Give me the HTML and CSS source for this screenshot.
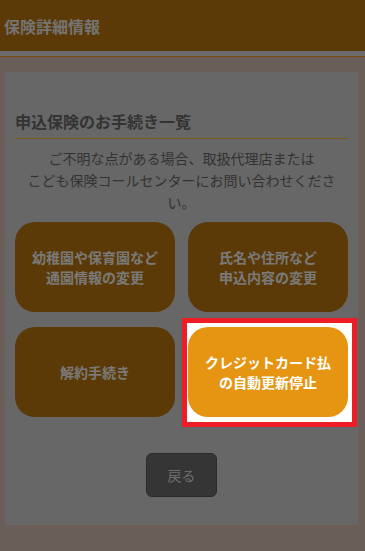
FILE: index.html
```html
<!DOCTYPE html>
<html lang="ja">
<head>
  <meta charset="utf-8">
  <title>保険詳細情報</title>
  <link rel="stylesheet" href="styles.css">
</head>
<body>
  <header class="app-header">
    <h1 class="app-title">保険詳細情報</h1>
  </header>
  <div class="header-band"></div>

  <main class="page">
    <section class="card">
      <h2 class="card-title">申込保険のお手続き一覧</h2>
      <p class="card-note">ご不明な点がある場合、取扱代理店または<br>こども保険コールセンターにお問い合わせください。</p>

      <div class="menu">
        <a href="javascript: void 0;" class="menu-item">幼稚園や保育園など<br>通園情報の変更</a>
        <a href="javascript: void 0;" class="menu-item">氏名や住所など<br>申込内容の変更</a>
        <a href="javascript: void 0;" class="menu-item">解約手続き</a>
        <div class="menu-cell">
          <span class="highlight"></span>
          <a href="javascript: void 0;" class="menu-item menu-item-active">クレジットカード払<br>の自動更新停止</a>
        </div>
      </div>

      <div class="back-row">
        <a href="javascript: void 0;" class="back-btn">戻る</a>
      </div>
    </section>
  </main>
</body>
</html>
```

FILE: styles.css
```css
html, body {
  padding: 0;
  margin: 0;
}
body {
  background-color: #695f58;
  font-family: "Noto Sans CJK JP", "Noto Sans", sans-serif;
  color: #333;
}
.app-header {
  height: 51px;
  background-color: #5c3a08;
  display: flex;
  align-items: center;
  padding-left: 4px;
}
.app-title {
  margin: 0;
  font-size: 16px;
  font-weight: bold;
  color: #747474;
}
.header-band {
  height: 5px;
  background-color: #6b6b6b;
  border-bottom: 1px solid #7a4a0c;
}
.page {
  padding: 15px 7px 26px 5px;
}
.card {
  background-color: #676767;
  padding: 37px 10px 28px;
}
.card-title {
  margin: 0;
  font-size: 16px;
  line-height: 24px;
  font-weight: bold;
  color: #333;
  padding-bottom: 5px;
  border-bottom: 1px solid #7b5a1c;
}
.card-note {
  margin: 8px 0 0;
  padding: 0 10px;
  font-size: 14px;
  line-height: 22px;
  text-align: center;
  color: #333;
}
.menu {
  margin-top: 9px;
  display: grid;
  grid-template-columns: 160px 160px;
  column-gap: 13px;
  row-gap: 15px;
}
.menu-cell {
  position: relative;
  display: flex;
}
.menu-item {
  flex: 1;
  height: 90px;
  display: flex;
  align-items: center;
  justify-content: center;
  text-align: center;
  border-radius: 20px;
  background-color: #5c3a08;
  color: #7a7a7a;
  font-size: 14px;
  line-height: 20px;
  font-weight: bold;
  text-decoration: none;
}
.highlight {
  position: absolute;
  left: -6px;
  top: -9px;
  width: 165px;
  height: 99px;
  border: 5px solid #ee1c25;
  background-color: #fff;
}
.menu-item-active {
  position: relative;
  z-index: 1;
  background-color: #e69513;
  color: #fff;
}
.back-row {
  margin-top: 36px;
  display: flex;
  justify-content: center;
}
.back-btn {
  width: 69px;
  height: 42px;
  display: flex;
  align-items: center;
  justify-content: center;
  border: 1px solid #2b2b2b;
  border-radius: 6px;
  background-color: #353535;
  color: #6e6e6e;
  font-size: 14px;
  text-decoration: none;
}
```
